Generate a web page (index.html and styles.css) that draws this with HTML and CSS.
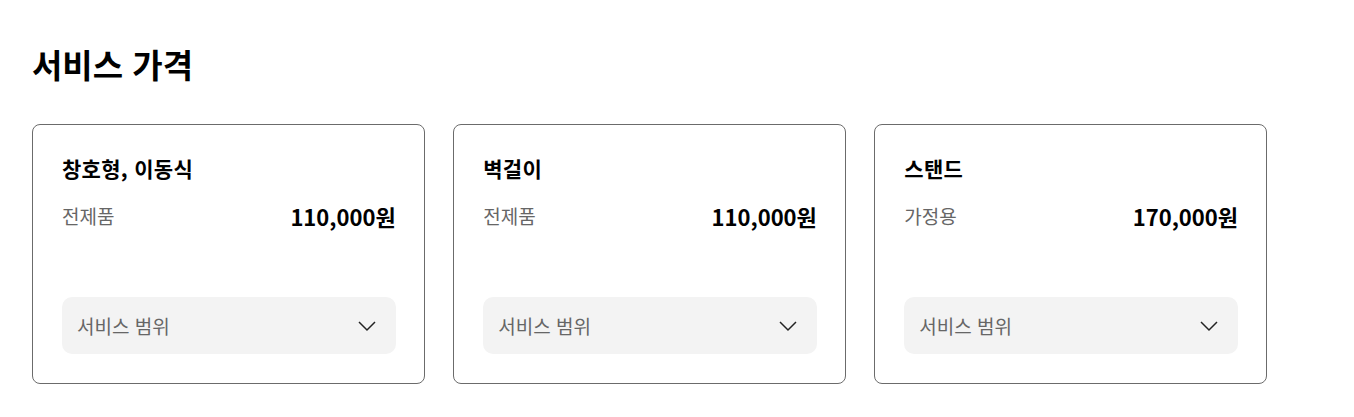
FILE: index.html
```html
<!DOCTYPE html>
<html lang="ko">
<head>
<meta charset="utf-8">
<link rel="stylesheet" href="styles.css">
</head>
<body>
<main class="page">
  <h1 class="heading">서비스 가격</h1>
  <div class="cards">
    <section class="card">
      <h2 class="card-title">창호형, 이동식</h2>
      <div class="price-row"><span class="label">전제품</span><span class="price">110,000원</span></div>
      <button class="dropdown" type="button"><span>서비스 범위</span>
        <svg class="chev" width="24" height="24" viewBox="0 0 24 24"><path d="M4 8 L12 16 L20 8" fill="none" stroke="#222" stroke-width="1.5"/></svg>
      </button>
    </section>
    <section class="card">
      <h2 class="card-title">벽걸이</h2>
      <div class="price-row"><span class="label">전제품</span><span class="price">110,000원</span></div>
      <button class="dropdown" type="button"><span>서비스 범위</span>
        <svg class="chev" width="24" height="24" viewBox="0 0 24 24"><path d="M4 8 L12 16 L20 8" fill="none" stroke="#222" stroke-width="1.5"/></svg>
      </button>
    </section>
    <section class="card">
      <h2 class="card-title">스탠드</h2>
      <div class="price-row"><span class="label">가정용</span><span class="price">170,000원</span></div>
      <button class="dropdown" type="button"><span>서비스 범위</span>
        <svg class="chev" width="24" height="24" viewBox="0 0 24 24"><path d="M4 8 L12 16 L20 8" fill="none" stroke="#222" stroke-width="1.5"/></svg>
      </button>
    </section>
  </div>
</main>
</body>
</html>
```

FILE: styles.css
```css
* { box-sizing: border-box; }
html, body { margin: 0; padding: 0; background: #fff; }
body {
  font-family: "Noto Sans CJK KR", "Noto Sans", sans-serif;
  color: #000;
}
.page { padding: 0 32px; }
.heading {
  margin: 40px 0 35px;
  font-size: 33px;
  line-height: 49px;
  font-weight: 700;
}
.cards {
  display: flex;
  gap: 28.5px;
  width: 1235px;
}
.card {
  flex: 1 1 0;
  height: 260px;
  border: 1px solid #6b6b6b;
  border-radius: 8px;
  padding: 28px 28px 29px 29px;
  display: flex;
  flex-direction: column;
}
.card-title {
  margin: 0;
  font-size: 21px;
  line-height: 30px;
  font-weight: 700;
  letter-spacing: 0.3px;
}
.price-row {
  margin-top: 18px;
  display: flex;
  justify-content: space-between;
  align-items: center;
  line-height: 30px;
}
.label { font-size: 19px; color: #666; }
.price { font-size: 22px; font-weight: 700; }
.dropdown {
  margin-top: auto;
  height: 57px;
  width: 100%;
  border: 0;
  border-radius: 10px;
  background: #f3f3f3;
  padding: 0 17px 0 15px;
  display: flex;
  align-items: center;
  justify-content: space-between;
  font-family: inherit;
  font-size: 19px;
  color: #666;
  cursor: pointer;
}
.chev { display: block; }
```
